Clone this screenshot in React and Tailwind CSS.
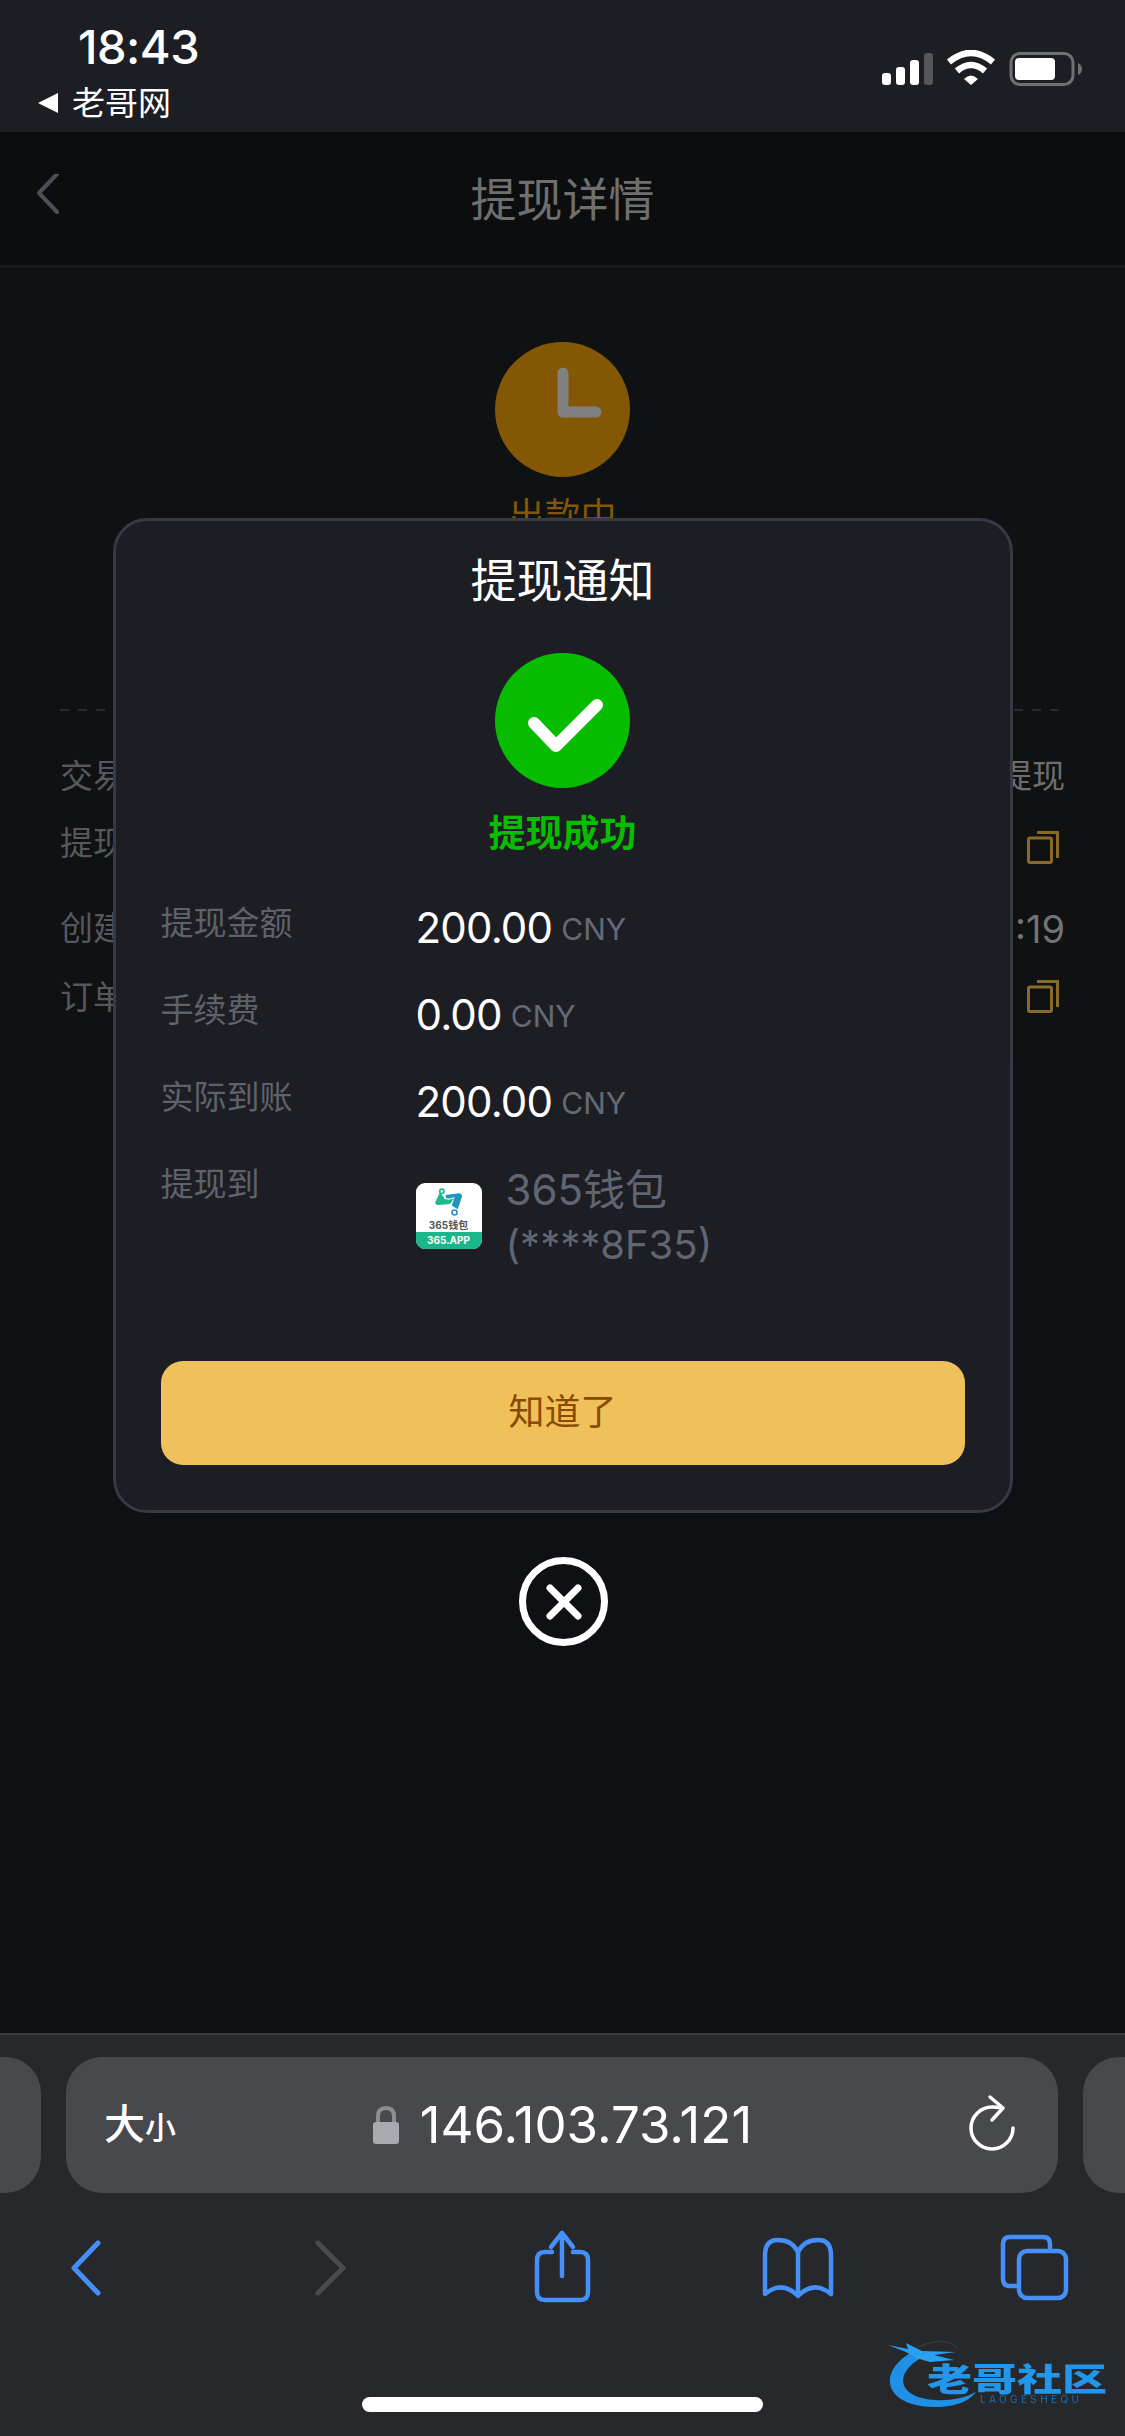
import React from 'react';

const BLUE = '#4490f8';

const StatusBar = () => (
  <div className="relative h-[132px] shrink-0 bg-[#1c1e24] text-white">
    <div className="pl-[78px] pt-[20px] text-[47px] leading-[54px] font-medium tracking-[-0.5px]">18:43</div>
    <div className="flex items-center pl-[38px] h-[44px] mt-[7px]">
      <span className="w-0 h-0 border-y-[10px] border-y-transparent border-r-[20px] border-r-white" />
      <span className="ml-[14px] text-[33px] leading-[44px]">老哥网</span>
    </div>
    {/* signal, wifi, battery */}
    <svg className="absolute left-[880px] top-[50px]" width="204" height="38" viewBox="880 50 204 38">
      <rect x="882" y="73" width="9" height="12" rx="3" fill="#fff" />
      <rect x="896" y="67" width="9" height="18" rx="3" fill="#fff" />
      <rect x="910" y="60" width="9" height="25" rx="3" fill="#fff" />
      <rect x="924" y="53" width="9" height="32" rx="3" fill="#55565a" />
      <path d="M949 62 Q971 44 993 62" fill="none" stroke="#fff" strokeWidth="6.5" />
      <path d="M957 71 Q971 59 985 71" fill="none" stroke="#fff" strokeWidth="6.5" />
      <path d="M964 79 Q971 72 978 79 L971 85 Z" fill="#fff" />
      <rect x="1011" y="53.5" width="62" height="31" rx="9" fill="none" stroke="#6f7074" strokeWidth="3" />
      <rect x="1015" y="58" width="40" height="22" rx="4" fill="#fff" />
      <path d="M1078 63 Q1082 65 1082 69 Q1082 73 1078 75 Z" fill="#6f7074" />
    </svg>
  </div>
);

const Header = () => (
  <div className="relative flex items-center justify-center h-[136px] shrink-0 bg-[#0c0d0f] border-b-[3px] border-[#17191d]">
    <svg className="absolute left-[30px] top-[42px]" width="34" height="44" viewBox="0 0 34 44" fill="none">
      <path d="M27 4 L9 23 L27 42" stroke="#4b5058" strokeWidth="4" strokeLinecap="round" strokeLinejoin="round" transform="translate(0 -4)" />
    </svg>
    <span className="text-[46px] leading-[54px] text-[#6f6f6f]">提现详情</span>
  </div>
);

const CopyIcon = ({ className }) => (
  <svg className={className} width="32" height="33" viewBox="0 0 32 33" fill="none" stroke="#8a6a2a" strokeWidth="3">
    <rect x="1.5" y="7" width="23" height="24.5" rx="1.5" />
    <path d="M10 1.5 H30.5 V27" />
  </svg>
);

const BackgroundRow = ({ label, right, className }) => (
  <div className={`flex items-center justify-between h-[40px] ${className}`}>
    <span className="text-[33px] text-[#55585e]">{label}</span>
    {right}
  </div>
);

const BackgroundCard = () => (
  <div className="mx-[30px] mt-[30px] h-[762px] rounded-[30px] bg-[#0f1113] px-[30px] pt-[44px]">
    <div className="mx-auto flex items-center justify-center w-[135px] h-[135px] rounded-full bg-[#835703]">
      <svg width="135" height="135" viewBox="0 0 135 135" fill="none">
        <path d="M68 31 V70 H101" stroke="#808080" strokeWidth="11" strokeLinecap="round" strokeLinejoin="round" />
      </svg>
    </div>
    <div className="mt-[12px] text-center text-[36px] leading-[54px] text-[#835703]">出款中</div>
    <div className="mt-[166px] h-[2px] bg-[repeating-linear-gradient(90deg,#2a2b2e_0_9px,transparent_9px_18px)]" />
    <BackgroundRow className="mt-[46px]" label="交易类型" right={<span className="text-[33px] text-[#6e6e6e]">提现</span>} />
    <BackgroundRow className="mt-[27px]" label="提现地址" right={<CopyIcon className="mr-[6px] mt-[6px]" />} />
    <BackgroundRow className="mt-[45px]" label="创建时间" right={<span className="text-[38px] text-[#737373]">:19</span>} />
    <BackgroundRow className="mt-[29px]" label="订单号" right={<CopyIcon className="mr-[6px] -mt-[4px]" />} />
  </div>
);

const Amount = ({ label, value }) => (
  <div className="flex h-[50px] mb-[37px]">
    <span className="w-[255px] text-[33px] leading-[40px] text-[#5d626b]">{label}</span>
    <span className="flex items-baseline">
      <span className="text-[42px] leading-[50px] text-white tracking-[-0.8px]">{value}</span>
      <span className="ml-[9px] text-[30px] text-[#646a75] -translate-y-[3px]">CNY</span>
    </span>
  </div>
);

const WalletIcon = () => (
  <div className="flex flex-col w-[66px] h-[66px] rounded-[9px] overflow-hidden bg-white shrink-0">
    <div className="flex-1 flex flex-col items-center pt-[4px]">
      <svg width="30" height="32" viewBox="115 85 95 90" fill="none" className="shrink-0">
        <path d="M134 96 L119 127 Q118 137 130 136 L166 133 L180 113 L149 116 Z" fill="#1fb98b" />
        <path d="M152 105 L195 99 Q206 100 203 112 L190 150 L171 138 L180 113 L153 114 Z" fill="#1f94c0" />
        <path d="M147 116 Q165 122 180 113" stroke="#fff" strokeWidth="3" />
        <circle cx="140" cy="93" r="7" fill="#fff" stroke="#1fb98b" strokeWidth="5" />
        <circle cx="180" cy="160" r="8" fill="#fff" stroke="#1f94c0" strokeWidth="5" />
      </svg>
      <span className="text-[10px] leading-[12px] font-bold text-[#555] whitespace-nowrap">365钱包</span>
    </div>
    <div className="h-[17px] bg-[#1bb68a] text-white text-[10px] leading-[17px] font-bold text-center">365.APP</div>
  </div>
);

const WalletRow = () => (
  <div className="flex items-start">
    <div className="mt-[19px]"><WalletIcon /></div>
    <div className="ml-[24px] -mt-[2px] text-[40px] leading-[55px] text-[#5f6671]">
      <div className="text-[42px]">365钱包</div>
      <div>(****8F35)</div>
    </div>
  </div>
);

const Modal = () => (
  <div className="absolute inset-0 flex flex-col items-center pt-[250px]">
    <div className="flex flex-col w-[900px] h-[995px] px-[45px] pt-[32px] pb-[45px] rounded-[34px] border-[3px] border-[#343a46] bg-[#1c1e24]">
      <div className="text-center text-[46px] leading-[54px] text-white">提现通知</div>
      <div className="mx-auto mt-[46px] w-[135px] h-[135px] rounded-full bg-[#08bd00] shrink-0">
        <svg width="135" height="135" viewBox="0 0 135 135" fill="none">
          <path d="M39 70 L61 93 L102 52" stroke="#fff" strokeWidth="12" strokeLinecap="round" strokeLinejoin="round" />
        </svg>
      </div>
      <div className="mt-[24px] text-center text-[37px] leading-[44px] font-bold text-[#08bd00]">提现成功</div>
      <div className="mt-[47px]">
        <Amount label="提现金额" value="200.00" />
        <Amount label="手续费" value="0.00" />
        <Amount label="实际到账" value="200.00" />
        <div className="flex">
          <span className="w-[255px] text-[33px] leading-[40px] text-[#5d626b]">提现到</span>
          <WalletRow />
        </div>
      </div>
      <button className="mt-auto h-[104px] pb-[2px] rounded-[22px] bg-[#f0c05a] text-[36px] text-[#8a4a00]">知道了</button>
    </div>
    <div className="mt-[44px] ml-[2px] flex items-center justify-center w-[89px] h-[89px] rounded-full border-[7px] border-white">
      <svg width="40" height="40" viewBox="0 0 40 40" fill="none">
        <path d="M6 6 L34 34 M34 6 L6 34" stroke="#fff" strokeWidth="7" strokeLinecap="round" />
      </svg>
    </div>
  </div>
);

const AddressBar = () => (
  <div className="flex gap-[25px]">
    <div className="w-[41px] h-[136px] rounded-r-[36px] bg-[#48494d]" />
    <div className="relative flex items-center justify-center w-[992px] h-[136px] rounded-[36px] bg-[#48494d] text-white">
      <span className="absolute left-[38px] top-[44px] flex items-baseline font-medium">
        <span className="text-[41px] leading-[46px]">大</span>
        <span className="text-[31px] leading-[46px]">小</span>
      </span>
      <svg className="mr-[20px]" width="28" height="40" viewBox="0 0 28 40" fill="none">
        <path d="M6 18 V11 Q6 3 14 3 Q22 3 22 11 V18" stroke="#8d8e94" strokeWidth="4" />
        <rect x="1" y="17" width="26" height="22" rx="3" fill="#a9a9b0" />
      </svg>
      <span className="text-[51px] leading-[56px]">146.103.73.121</span>
      <svg className="absolute right-[40px] top-[36px]" width="50" height="60" viewBox="968 2093 50 60" fill="none" stroke="#fff" strokeWidth="3.5" strokeLinecap="round" strokeLinejoin="round">
        <path d="M1002 2108 Q997 2107 992 2107 A21 21 0 1 0 1013 2128" />
        <path d="M990 2097 L1003 2108 L992 2120" />
      </svg>
    </div>
    <div className="w-[42px] h-[136px] rounded-l-[36px] bg-[#48494d]" />
  </div>
);

const NavIcons = () => (
  <div className="flex justify-between pl-[46px] pr-[51px] mt-[32px]">
    <svg width="80" height="80" viewBox="46 2225 80 80" fill="none" stroke={BLUE} strokeWidth="5" strokeLinecap="round" strokeLinejoin="round">
      <path d="M98 2243 L74 2268 L98 2293" />
    </svg>
    <svg width="80" height="80" viewBox="283 2225 80 80" fill="none" stroke="#4a4b4e" strokeWidth="5" strokeLinecap="round" strokeLinejoin="round">
      <path d="M318 2243 L343 2268 L318 2293" />
    </svg>
    <svg width="80" height="80" viewBox="520 2225 80 80" fill="none" stroke={BLUE} strokeWidth="4.5" strokeLinecap="round" strokeLinejoin="round">
      <path d="M552 2252 H545 Q537 2252 537 2260 V2292 Q537 2300 545 2300 H580 Q588 2300 588 2292 V2260 Q588 2252 580 2252 H573" />
      <path d="M562 2276 V2233 M551 2247 L562 2233 L573 2247" />
    </svg>
    <svg width="80" height="80" viewBox="757 2225 80 80" fill="none" stroke={BLUE} strokeWidth="4.5" strokeLinejoin="round">
      <path d="M798 2252 Q792 2240 778 2240 Q765 2240 765 2255 V2294 Q782 2280 798 2296 Q814 2280 831 2294 V2255 Q831 2240 818 2240 Q804 2240 798 2252 V2296" />
    </svg>
    <svg width="80" height="80" viewBox="994 2225 80 80" fill="none" stroke={BLUE} strokeWidth="4.5">
      <path d="M1017 2286 H1010 Q1003 2286 1003 2279 V2244 Q1003 2237 1010 2237 H1043 Q1050 2237 1050 2244 V2250" />
      <rect x="1019" y="2251" width="47" height="47" rx="8" />
    </svg>
  </div>
);

// watermark sits on top of the toolbar corner
const Watermark = () => (
  <div className="absolute left-[885px] top-[2338px] w-[228px] h-[76px] blur-[0.6px]">
    <svg className="absolute inset-0" width="228" height="76" viewBox="885 2338 228 76" fill="none">
      <path d="M912 2352 C 876 2372, 884 2407, 935 2407 C 958 2407, 970 2400, 976 2392 C 965 2398, 950 2401, 935 2400 C 898 2398, 893 2374, 921 2358 Z" fill="#1f90e6" />
      <path d="M888 2345 L908 2349 L906 2343 L922 2351 L956 2352 L934 2355 L954 2360 L930 2362 L916 2358 L906 2352 Z" fill="#2aa0f0" />
      <path d="M915 2348 Q945 2335 958 2348" stroke="#3a4048" strokeWidth="1" />
    </svg>
    <span className="absolute left-[42px] top-[14px] text-[45px] leading-[54px] font-black text-[#2196ea] scale-y-[0.72] whitespace-nowrap">老哥社区</span>
    <span className="absolute left-[95px] top-[56px] text-[10px] leading-[10px] tracking-[3.4px] text-[#1b6fae] whitespace-nowrap">LAOGESHEQU</span>
  </div>
);

const Toolbar = () => (
  <div className="h-[403px] shrink-0 bg-[#27282c] border-t-2 border-[#3a3b3f] pt-[22px]">
    <AddressBar />
    <NavIcons />
    <div className="mx-auto mt-[92px] w-[401px] h-[15px] rounded-full bg-white" />
  </div>
);

export default function App() {
  return (
    <div className="relative flex flex-col w-[1125px] h-[2436px] overflow-hidden bg-[#0e1014] font-['Inter','Noto_Sans_CJK_SC',sans-serif]">
      <StatusBar />
      <Header />
      <div className="relative flex-1">
        <BackgroundCard />
        <Modal />
      </div>
      <Toolbar />
      <Watermark />
    </div>
  );
}
